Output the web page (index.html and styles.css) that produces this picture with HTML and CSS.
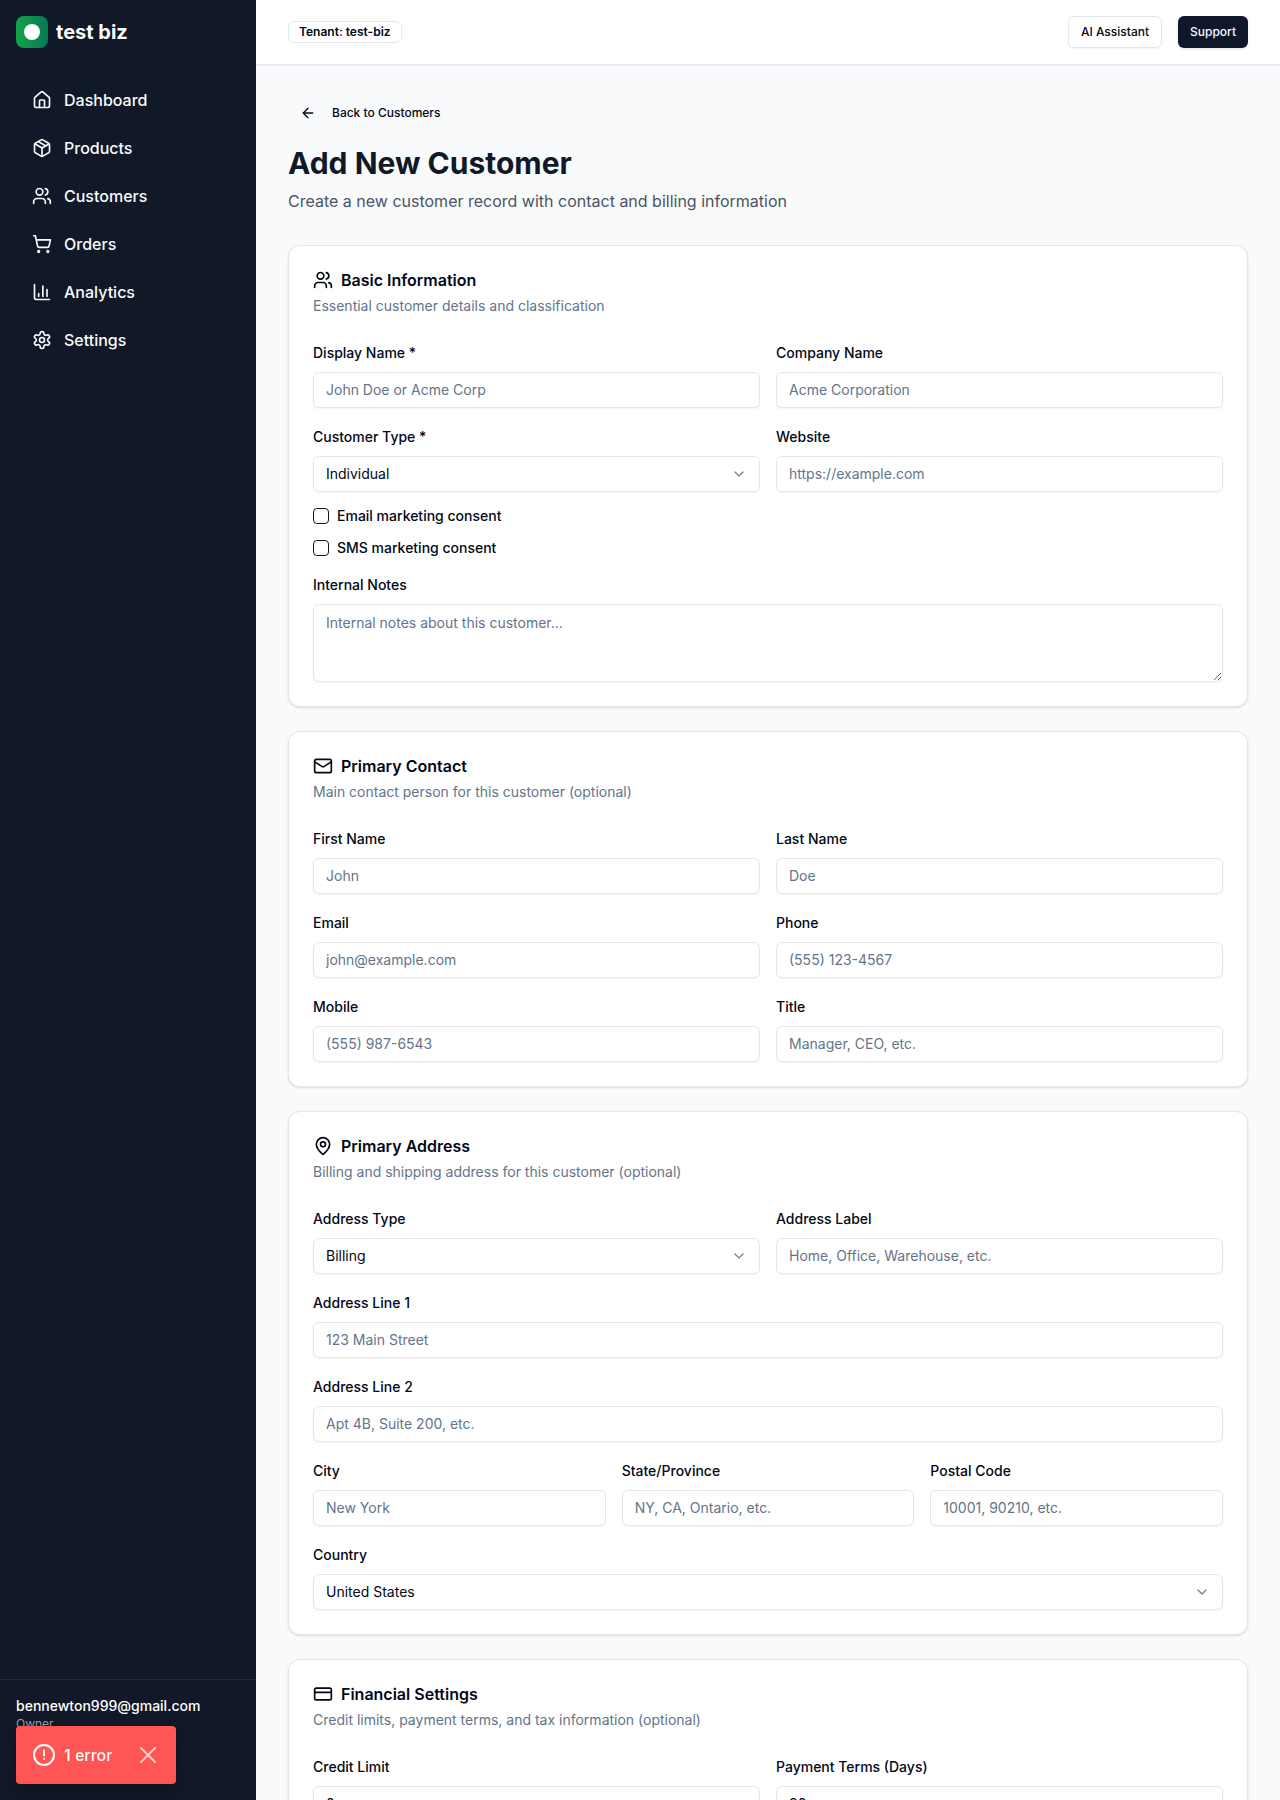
FILE: index.html
```html
<!DOCTYPE html>
<html lang="en">
<head>
    <meta charset="UTF-8">
    <meta name="viewport" content="width=device-width, initial-scale=1.0">
    <title>Add New Customer</title>
    <link rel="stylesheet" href="styles.css">
</head>
<body>
    <div class="app">
        <aside class="sidebar">
            <div class="brand">
                <span class="brand-logo"></span>
                <span class="brand-name">test biz</span>
            </div>
            <nav class="nav">
                <a href="#" class="nav-link">
                    <svg class="icon" viewBox="0 0 24 24"><path d="M15 21v-8a1 1 0 0 0-1-1h-4a1 1 0 0 0-1 1v8"/><path d="M3 10a2 2 0 0 1 .709-1.528l7-5.999a2 2 0 0 1 2.582 0l7 5.999A2 2 0 0 1 21 10v9a2 2 0 0 1-2 2H5a2 2 0 0 1-2-2z"/></svg>
                    Dashboard
                </a>
                <a href="#" class="nav-link">
                    <svg class="icon" viewBox="0 0 24 24"><path d="M11 21.73a2 2 0 0 0 2 0l7-4A2 2 0 0 0 21 16V8a2 2 0 0 0-1-1.73l-7-4a2 2 0 0 0-2 0l-7 4A2 2 0 0 0 3 8v8a2 2 0 0 0 1 1.73z"/><path d="M12 22V12"/><path d="m3.3 7 8.7 5 8.7-5"/><path d="m7.5 4.27 9 5.15"/></svg>
                    Products
                </a>
                <a href="#" class="nav-link">
                    <svg class="icon" viewBox="0 0 24 24"><path d="M16 21v-2a4 4 0 0 0-4-4H6a4 4 0 0 0-4 4v2"/><circle cx="9" cy="7" r="4"/><path d="M22 21v-2a4 4 0 0 0-3-3.87"/><path d="M16 3.13a4 4 0 0 1 0 7.75"/></svg>
                    Customers
                </a>
                <a href="#" class="nav-link">
                    <svg class="icon" viewBox="0 0 24 24"><circle cx="8" cy="21" r="1"/><circle cx="19" cy="21" r="1"/><path d="M2.05 2.05h2l2.66 12.42a2 2 0 0 0 2 1.58h9.78a2 2 0 0 0 1.95-1.57l1.65-7.43H5.12"/></svg>
                    Orders
                </a>
                <a href="#" class="nav-link">
                    <svg class="icon" viewBox="0 0 24 24"><path d="M3 3v16a2 2 0 0 0 2 2h16"/><path d="M18 17V9"/><path d="M13 17V5"/><path d="M8 17v-3"/></svg>
                    Analytics
                </a>
                <a href="#" class="nav-link">
                    <svg class="icon" viewBox="0 0 24 24"><path d="M12.22 2h-.44a2 2 0 0 0-2 2v.18a2 2 0 0 1-1 1.73l-.43.25a2 2 0 0 1-2 0l-.15-.08a2 2 0 0 0-2.73.73l-.22.38a2 2 0 0 0 .73 2.73l.15.1a2 2 0 0 1 1 1.72v.51a2 2 0 0 1-1 1.74l-.15.09a2 2 0 0 0-.73 2.73l.22.38a2 2 0 0 0 2.73.73l.15-.08a2 2 0 0 1 2 0l.43.25a2 2 0 0 1 1 1.73V20a2 2 0 0 0 2 2h.44a2 2 0 0 0 2-2v-.18a2 2 0 0 1 1-1.73l.43-.25a2 2 0 0 1 2 0l.15.08a2 2 0 0 0 2.73-.73l.22-.39a2 2 0 0 0-.73-2.73l-.15-.08a2 2 0 0 1-1-1.74v-.5a2 2 0 0 1 1-1.74l.15-.09a2 2 0 0 0 .73-2.73l-.22-.38a2 2 0 0 0-2.73-.73l-.15.08a2 2 0 0 1-2 0l-.43-.25a2 2 0 0 1-1-1.73V4a2 2 0 0 0-2-2z"/><circle cx="12" cy="12" r="3"/></svg>
                    Settings
                </a>
            </nav>
            <div class="account">
                <div class="account-email">bennewton999@gmail.com</div>
                <div class="account-role">Owner</div>
            </div>
        </aside>

        <div class="content">
            <header class="topbar">
                <span class="badge">Tenant: test-biz</span>
                <div class="topbar-actions">
                    <button type="button" class="btn btn-outline">AI Assistant</button>
                    <button type="button" class="btn btn-primary">Support</button>
                </div>
            </header>

            <main class="main">
                <a href="#" class="btn back-link">
                    <svg class="icon icon-sm" viewBox="0 0 24 24"><path d="m12 19-7-7 7-7"/><path d="M19 12H5"/></svg>
                    Back to Customers
                </a>
                <h1>Add New Customer</h1>
                <p class="subtitle">Create a new customer record with contact and billing information</p>

                <form class="form">
                    <section class="card">
                        <h2 class="card-title">
                            <svg class="icon" viewBox="0 0 24 24"><path d="M16 21v-2a4 4 0 0 0-4-4H6a4 4 0 0 0-4 4v2"/><circle cx="9" cy="7" r="4"/><path d="M22 21v-2a4 4 0 0 0-3-3.87"/><path d="M16 3.13a4 4 0 0 1 0 7.75"/></svg>
                            Basic Information
                        </h2>
                        <p class="card-desc">Essential customer details and classification</p>
                        <div class="fields">
                            <div class="row row-2">
                                <div class="field">
                                    <label for="displayName">Display Name *</label>
                                    <input type="text" class="control" id="displayName" placeholder="John Doe or Acme Corp">
                                </div>
                                <div class="field">
                                    <label for="companyName">Company Name</label>
                                    <input type="text" class="control" id="companyName" placeholder="Acme Corporation">
                                </div>
                            </div>
                            <div class="row row-2">
                                <div class="field">
                                    <label for="customerType">Customer Type *</label>
                                    <div class="select-wrap">
                                        <select class="control" id="customerType">
                                            <option>Individual</option>
                                            <option>Business</option>
                                        </select>
                                        <svg class="icon icon-sm chevron" viewBox="0 0 24 24"><path d="m6 9 6 6 6-6"/></svg>
                                    </div>
                                </div>
                                <div class="field">
                                    <label for="website">Website</label>
                                    <input type="url" class="control" id="website" placeholder="https://example.com">
                                </div>
                            </div>
                            <div class="check">
                                <input type="checkbox" id="emailConsent">
                                <label for="emailConsent">Email marketing consent</label>
                            </div>
                            <div class="check">
                                <input type="checkbox" id="smsConsent">
                                <label for="smsConsent">SMS marketing consent</label>
                            </div>
                            <div class="field">
                                <label for="notes">Internal Notes</label>
                                <textarea class="control" id="notes" rows="3" placeholder="Internal notes about this customer..."></textarea>
                            </div>
                        </div>
                    </section>

                    <section class="card">
                        <h2 class="card-title">
                            <svg class="icon" viewBox="0 0 24 24"><rect width="20" height="16" x="2" y="4" rx="2"/><path d="m22 7-8.97 5.7a1.94 1.94 0 0 1-2.06 0L2 7"/></svg>
                            Primary Contact
                        </h2>
                        <p class="card-desc">Main contact person for this customer (optional)</p>
                        <div class="fields">
                            <div class="row row-2">
                                <div class="field">
                                    <label for="firstName">First Name</label>
                                    <input type="text" class="control" id="firstName" placeholder="John">
                                </div>
                                <div class="field">
                                    <label for="lastName">Last Name</label>
                                    <input type="text" class="control" id="lastName" placeholder="Doe">
                                </div>
                            </div>
                            <div class="row row-2">
                                <div class="field">
                                    <label for="email">Email</label>
                                    <input type="email" class="control" id="email" placeholder="john@example.com">
                                </div>
                                <div class="field">
                                    <label for="phone">Phone</label>
                                    <input type="tel" class="control" id="phone" placeholder="(555) 123-4567">
                                </div>
                            </div>
                            <div class="row row-2">
                                <div class="field">
                                    <label for="mobile">Mobile</label>
                                    <input type="tel" class="control" id="mobile" placeholder="(555) 987-6543">
                                </div>
                                <div class="field">
                                    <label for="jobTitle">Title</label>
                                    <input type="text" class="control" id="jobTitle" placeholder="Manager, CEO, etc.">
                                </div>
                            </div>
                        </div>
                    </section>

                    <section class="card">
                        <h2 class="card-title">
                            <svg class="icon" viewBox="0 0 24 24"><path d="M20 10c0 4.993-5.539 10.193-7.399 11.799a1 1 0 0 1-1.202 0C9.539 20.193 4 14.993 4 10a8 8 0 0 1 16 0"/><circle cx="12" cy="10" r="3"/></svg>
                            Primary Address
                        </h2>
                        <p class="card-desc">Billing and shipping address for this customer (optional)</p>
                        <div class="fields">
                            <div class="row row-2">
                                <div class="field">
                                    <label for="addressType">Address Type</label>
                                    <div class="select-wrap">
                                        <select class="control" id="addressType">
                                            <option>Billing</option>
                                            <option>Shipping</option>
                                        </select>
                                        <svg class="icon icon-sm chevron" viewBox="0 0 24 24"><path d="m6 9 6 6 6-6"/></svg>
                                    </div>
                                </div>
                                <div class="field">
                                    <label for="addressLabel">Address Label</label>
                                    <input type="text" class="control" id="addressLabel" placeholder="Home, Office, Warehouse, etc.">
                                </div>
                            </div>
                            <div class="field">
                                <label for="line1">Address Line 1</label>
                                <input type="text" class="control" id="line1" placeholder="123 Main Street">
                            </div>
                            <div class="field">
                                <label for="line2">Address Line 2</label>
                                <input type="text" class="control" id="line2" placeholder="Apt 4B, Suite 200, etc.">
                            </div>
                            <div class="row row-3">
                                <div class="field">
                                    <label for="city">City</label>
                                    <input type="text" class="control" id="city" placeholder="New York">
                                </div>
                                <div class="field">
                                    <label for="state">State/Province</label>
                                    <input type="text" class="control" id="state" placeholder="NY, CA, Ontario, etc.">
                                </div>
                                <div class="field">
                                    <label for="postal">Postal Code</label>
                                    <input type="text" class="control" id="postal" placeholder="10001, 90210, etc.">
                                </div>
                            </div>
                            <div class="field">
                                <label for="country">Country</label>
                                <div class="select-wrap">
                                    <select class="control" id="country">
                                        <option>United States</option>
                                        <option>Canada</option>
                                    </select>
                                    <svg class="icon icon-sm chevron" viewBox="0 0 24 24"><path d="m6 9 6 6 6-6"/></svg>
                                </div>
                            </div>
                        </div>
                    </section>

                    <section class="card">
                        <h2 class="card-title">
                            <svg class="icon" viewBox="0 0 24 24"><rect width="20" height="14" x="2" y="5" rx="2"/><path d="M2 10h20"/></svg>
                            Financial Settings
                        </h2>
                        <p class="card-desc">Credit limits, payment terms, and tax information (optional)</p>
                        <div class="fields">
                            <div class="row row-2">
                                <div class="field">
                                    <label for="creditLimit">Credit Limit</label>
                                    <input type="number" class="control" id="creditLimit" value="0">
                                </div>
                                <div class="field">
                                    <label for="paymentTerms">Payment Terms (Days)</label>
                                    <input type="number" class="control" id="paymentTerms" value="30">
                                </div>
                            </div>
                        </div>
                    </section>
                </form>
            </main>
        </div>
    </div>

    <div class="toast" role="alert">
        <svg class="icon toast-icon" viewBox="0 0 24 24"><circle cx="12" cy="12" r="10"/><path d="M12 7.5v5"/><path d="M12 16h.01"/></svg>
        <span class="toast-text">1 error</span>
        <button type="button" class="toast-close" aria-label="Close">
            <svg class="icon toast-icon" viewBox="0 0 24 24"><path d="M5 5l14 14"/><path d="M19 5 5 19"/></svg>
        </button>
    </div>
</body>
</html>
```

FILE: styles.css
```css
* {
    box-sizing: border-box;
}

body {
    margin: 0;
    font-family: Inter, sans-serif;
    font-size: 16px;
    line-height: 24px;
    color: #020817;
    background-color: #f9fafb;
}

h1, h2, p {
    margin: 0;
}

button, input, select, textarea {
    font-family: inherit;
}

.app {
    display: flex;
    height: 100vh;
}

.icon {
    width: 20px;
    height: 20px;
    flex-shrink: 0;
    fill: none;
    stroke: currentColor;
    stroke-width: 2;
    stroke-linecap: round;
    stroke-linejoin: round;
}

.icon-sm {
    width: 16px;
    height: 16px;
}

/* Sidebar */
.sidebar {
    width: 256px;
    flex-shrink: 0;
    display: flex;
    flex-direction: column;
    background-color: #111827;
    color: #f9fafb;
}

.brand {
    display: flex;
    align-items: center;
    gap: 8px;
    padding: 16px;
}

.brand-logo {
    display: flex;
    align-items: center;
    justify-content: center;
    width: 32px;
    height: 32px;
    border-radius: 8px;
    background: linear-gradient(to right, #16a34a, #047857);
}

.brand-logo::after {
    content: "";
    width: 16px;
    height: 16px;
    border-radius: 50%;
    background-color: #fff;
}

.brand-name {
    font-size: 20px;
    font-weight: 700;
    color: #fff;
}

.nav {
    flex: 1;
    display: flex;
    flex-direction: column;
    gap: 8px;
    padding: 16px;
}

.nav-link {
    display: flex;
    align-items: center;
    gap: 12px;
    padding: 8px 16px;
    border-radius: 6px;
    font-weight: 500;
    color: inherit;
    text-decoration: none;
}

.nav-link:hover {
    background-color: #1f2937;
}

.account {
    padding: 16px 16px 68px;
    border-top: 1px solid #1f2937;
}

.account-email {
    font-size: 14px;
    line-height: 20px;
    font-weight: 500;
    color: #fff;
}

.account-role {
    font-size: 12px;
    line-height: 16px;
    color: #9ca3af;
}

/* Top bar */
.content {
    flex: 1;
    min-width: 0;
    overflow-y: auto;
    scrollbar-width: none;
}

.topbar {
    display: flex;
    align-items: center;
    justify-content: space-between;
    padding: 16px 32px;
    background-color: #fff;
    border-bottom: 1px solid #e5e7eb;
    box-shadow: 0 1px 2px rgba(0, 0, 0, 0.05);
}

.topbar-actions {
    display: flex;
    gap: 16px;
}

.badge {
    padding: 2px 10px;
    border: 1px solid #e5e7eb;
    border-radius: 6px;
    font-size: 12px;
    line-height: 16px;
    font-weight: 600;
}

.btn {
    display: inline-flex;
    align-items: center;
    height: 32px;
    padding: 0 12px;
    border: none;
    border-radius: 6px;
    font-size: 12px;
    line-height: 16px;
    font-weight: 500;
    color: #020817;
    text-decoration: none;
    cursor: pointer;
}

.btn-outline {
    background-color: #fff;
    border: 1px solid #e5e7eb;
    box-shadow: 0 1px 2px rgba(0, 0, 0, 0.05);
}

.btn-primary {
    background-color: #0f172a;
    color: #f8fafc;
    box-shadow: 0 1px 3px rgba(0, 0, 0, 0.1);
}

/* Page */
.main {
    display: flex;
    flex-direction: column;
    padding: 32px;
}

.back-link {
    align-self: flex-start;
    gap: 16px;
    margin-bottom: 16px;
}

h1 {
    font-size: 30px;
    line-height: 36px;
    font-weight: 700;
    color: #111827;
}

.subtitle {
    margin-top: 8px;
    color: #4b5563;
}

.form {
    display: flex;
    flex-direction: column;
    gap: 24px;
    margin-top: 32px;
}

.card {
    padding: 24px;
    background-color: #fff;
    border: 1px solid #e5e7eb;
    border-radius: 12px;
    box-shadow: 0 1px 3px rgba(0, 0, 0, 0.1), 0 1px 2px -1px rgba(0, 0, 0, 0.1);
}

.card-title {
    display: flex;
    align-items: center;
    gap: 8px;
    font-size: 16px;
    line-height: 20px;
    font-weight: 600;
}

.card-desc {
    margin-top: 6px;
    font-size: 14px;
    line-height: 20px;
    color: #64748b;
}

.fields {
    display: flex;
    flex-direction: column;
    gap: 16px;
    margin-top: 24px;
}

.row {
    display: grid;
    gap: 16px;
}

.row-2 {
    grid-template-columns: repeat(2, minmax(0, 1fr));
}

.row-3 {
    grid-template-columns: repeat(3, minmax(0, 1fr));
}

.field {
    display: flex;
    flex-direction: column;
    gap: 6px;
}

label {
    font-size: 14px;
    line-height: 26px;
    font-weight: 500;
}

.control {
    display: block;
    width: 100%;
    height: 36px;
    padding: 4px 12px;
    border: 1px solid #e5e7eb;
    border-radius: 6px;
    background-color: #fff;
    box-shadow: 0 1px 2px rgba(0, 0, 0, 0.05);
    font-size: 14px;
    line-height: 20px;
    color: #020817;
}

input.control {
    padding: 4px 12px 6px;
}

.control::placeholder {
    color: #64748b;
}

textarea.control {
    height: auto;
    padding: 8px 12px;
    resize: vertical;
}

select.control {
    appearance: none;
}

.select-wrap {
    position: relative;
}

.chevron {
    position: absolute;
    top: 10px;
    right: 13px;
    opacity: 0.5;
    pointer-events: none;
}

.check {
    display: flex;
    align-items: center;
    gap: 8px;
}

.check label {
    line-height: 16px;
}

.check input {
    appearance: none;
    width: 16px;
    height: 16px;
    margin: 0;
    border: 1px solid #0f172a;
    border-radius: 4px;
}

.check input:checked {
    background-color: #0f172a;
}

/* Error toast */
.toast {
    position: fixed;
    left: 16px;
    bottom: 16px;
    display: flex;
    align-items: center;
    padding: 16px;
    height: 58px;
    border-radius: 4px;
    background-color: #ff5555;
    color: #fff;
    box-shadow: 0 4px 16px rgba(0, 0, 0, 0.3);
}

.toast-icon {
    width: 24px;
    height: 24px;
}

.toast-text {
    margin: 0 24px 0 8px;
    font-weight: 500;
}

.toast-close {
    display: flex;
    padding: 0;
    border: none;
    background: none;
    color: #fff;
    opacity: 0.7;
    cursor: pointer;
}
```
